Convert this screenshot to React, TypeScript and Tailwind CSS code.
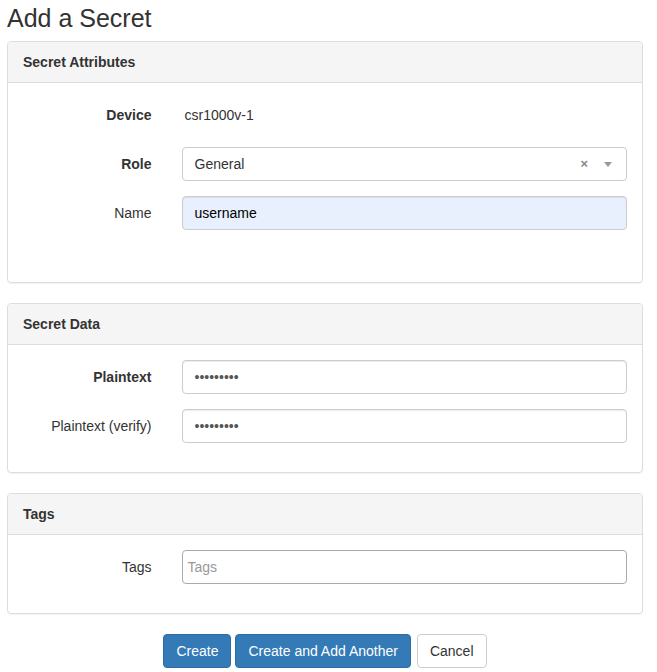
import React from "react";

function Row({ label, bold, children }: { label: string; bold?: boolean; children: React.ReactNode }) {
  return (
    <div className="flex mb-[15px]">
      <div className={`w-[158.5px] shrink-0 px-[15px] pt-[7px] text-right leading-[20px] ${bold ? "font-bold" : ""}`}>{label}</div>
      <div className="flex-1 px-[15px]">{children}</div>
    </div>
  );
}

function Input({ children, className = "" }: { children: React.ReactNode; className?: string }) {
  return (
    <div className={`h-[34px] border border-[#ccc] rounded-[4px] px-[12px] flex items-center leading-[20px] shadow-[inset_0_1px_1px_rgba(0,0,0,0.075)] ${className}`}>
      {children}
    </div>
  );
}

function Panel({ title, children, pb }: { title: string; children: React.ReactNode; pb: string }) {
  return (
    <div className="border border-[#ddd] rounded-[4px] mb-[20px] shadow-[0_1px_1px_rgba(0,0,0,0.05)]">
      <div className="bg-[#f5f5f5] border-b border-[#ddd] rounded-t-[3px] px-[15px] py-[10px] leading-[20px] font-bold">{title}</div>
      <div className={`pt-[15px] ${pb}`}>{children}</div>
    </div>
  );
}

export default function App() {
  return (
    <div className="bg-white text-[#333] text-[14px] leading-[20px] pl-[7px] w-[643px]" style={{ fontFamily: '"Liberation Sans", Arial, sans-serif' }}>
      <h1 className="text-[25px] leading-[30px] pt-[3px] pb-[8px] font-medium">Add a Secret</h1>
      <Panel title="Secret Attributes" pb="pb-[37px]">
        <Row label="Device" bold>
          <div className="h-[34px] pt-[7px] pl-[3px]">csr1000v-1</div>
        </Row>
        <Row label="Role" bold>
          <div className="h-[34px] border border-[#ccc] rounded-[4px] pl-[12px] pr-[14px] flex items-center">
            <span className="flex-1">General</span>
            <span className="text-[#888] font-bold text-[13px] mr-[16px]">×</span>
            <svg width="8" height="5" viewBox="0 0 8 5"><path d="M0 0h8L4 5z" fill="#999" /></svg>
          </div>
        </Row>
        <Row label="Name">
          <Input className="bg-[#e8f0fe] text-black">username</Input>
        </Row>
      </Panel>
      <Panel title="Secret Data" pb="pb-[14px]">
        <Row label="Plaintext" bold>
          <Input><span className="text-[#555]">•••••••••</span></Input>
        </Row>
        <Row label="Plaintext (verify)">
          <Input><span className="text-[#555]">•••••••••</span></Input>
        </Row>
      </Panel>
      <Panel title="Tags" pb="pb-[14px]">
        <Row label="Tags">
          <div className="h-[34px] border border-[#aaa] rounded-[4px] px-[5px] flex items-center text-[#999]">Tags</div>
        </Row>
      </Panel>
      <div className="flex justify-center gap-[4px] -ml-[7px] w-[650px]">
        <button className="bg-[#337ab7] border border-[#2e6da4] text-white rounded-[4px] px-[12px] py-[6px] leading-[20px]">Create</button>
        <button className="bg-[#337ab7] border border-[#2e6da4] text-white rounded-[4px] px-[12px] py-[6px] leading-[20px]">Create and Add Another</button>
        <button className="bg-white border border-[#ccc] text-[#333] rounded-[4px] px-[12px] py-[6px] leading-[20px] ml-[2px]">Cancel</button>
      </div>
    </div>
  );
}
